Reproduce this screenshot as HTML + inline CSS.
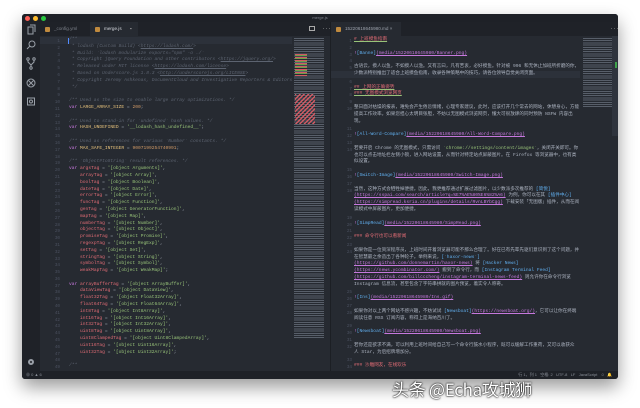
<!DOCTYPE html>
<html><head><meta charset="utf-8">
<style>
*{margin:0;padding:0;box-sizing:border-box}
body{width:640px;height:408px;background:#fff;position:relative;overflow:hidden;font-family:"Liberation Mono","Noto Sans CJK SC",monospace}
.win{position:absolute;left:22px;top:14px;width:596px;height:365px;background:#262a31;box-shadow:0 8px 18px rgba(0,0,0,.4);border-radius:3px;overflow:hidden}
.title{position:absolute;left:0;top:0;width:596px;height:8px;background:#1e2127;color:#7d828b;font:4px "Liberation Sans",sans-serif;text-align:center;line-height:8px}
.dot{position:absolute;top:2px;width:5px;height:5px;border-radius:50%}
.act{position:absolute;left:0;top:8px;width:18px;height:349px;background:#1f2228}
.tabs{position:absolute;left:18px;top:8px;width:578px;height:14px;background:#1f2228}
.tab{position:absolute;top:0;height:14px;font:4.6px "Liberation Sans",sans-serif;line-height:14px;color:#7d828b;padding-left:14px}
.tab i{position:absolute;left:5px;top:4.5px;width:5px;height:5px;background:#c08a3e;border-radius:1px}
.status{position:absolute;left:0;top:357px;width:596px;height:8px;background:#1e2127;color:#8a8f98;font:4px "Liberation Sans","Noto Sans CJK SC",sans-serif;line-height:8px}
.ln{position:absolute;color:#4b5160;font-size:4.3px;text-align:right;width:16px;white-space:pre}
.code{position:absolute;font-size:4.6px;white-space:pre;color:#abb2bf;line-height:6.8px}
.c{color:#5c6370;font-style:italic}.k{color:#c678dd}.v{color:#e06c75}.s{color:#98c379}.n{color:#d19a66}.y{color:#e5c07b}
.b{color:#61afef}.u{color:#c678dd;text-decoration:underline}.h{color:#e06c75;text-decoration:underline;text-decoration-color:#98c379}
.mm{position:absolute;height:1.2px}
.wm{position:absolute;left:392px;top:376px;font:17px "Noto Sans CJK SC",sans-serif;color:#fff;text-shadow:0 0 2px #000,0 0 1px #000;letter-spacing:-0.3px}
</style></head><body>
<div class="win">
 <div class="title">merge.js
  <div class="dot" style="left:3px;background:#fc5f57"></div>
  <div class="dot" style="left:11px;background:#fdbc2e"></div>
  <div class="dot" style="left:19px;background:#28c840"></div>
 </div>
 <div class="act">
  <svg width="18" height="349" viewBox="0 0 18 349" fill="none" stroke="#9aa0a8" stroke-width="1">
   <rect x="6" y="5" width="5" height="7"/><path d="M8 3h5v7"/>
   <circle cx="10" cy="22" r="3"/><path d="M8 24l-3 3"/>
   <circle cx="6" cy="37" r="1.2"/><circle cx="12" cy="37" r="1.2"/><circle cx="9" cy="46" r="1.2"/><path d="M6 38v2l3 3v2M12 38v2l-3 3"/>
   <circle cx="9" cy="61" r="4"/><path d="M6.5 58.5l5 5M11.5 58.5l-5 5"/>
   <rect x="5.5" y="76" width="7" height="7"/><circle cx="9" cy="79.5" r="1.5"/>
   <circle cx="9" cy="340" r="2.5" fill="#9aa0a8"/><circle cx="9" cy="340" r="1" fill="#1f2228" stroke="none"/>
  </svg>
 </div>
 <div class="tabs">
  <div class="tab" style="left:0;width:50px">_config.yml<i></i></div>
  <div class="tab" style="left:50px;width:48px;background:#262a31;color:#d7dae0">merge.js<i></i><span style="position:absolute;left:40px;color:#aaa">▪</span></div>
  <div style="position:absolute;left:269px;top:4px;width:6px;height:5px;border:1px solid #aaa"></div>
  <div style="position:absolute;left:282px;top:0;color:#aaa;font-size:5px;line-height:14px">···</div>
  <div style="position:absolute;left:290px;top:0;width:1px;height:14px;background:#1a1d22"></div>
  <div class="tab" style="left:291px;width:70px;background:#262a31;color:#9da3ad">15220618645980.md ×<i></i></div>
  <div style="position:absolute;left:570px;top:0;color:#aaa;font-size:5px;line-height:14px">···</div>
 </div>
 <!-- left editor -->
 <div style="position:absolute;left:18px;top:23px;width:290px;height:7px;background:#2c313a"></div>
 <div style="position:absolute;left:46px;top:24px;width:1px;height:6px;background:#528bff"></div>
 <div class="ln" style="left:22px;top:25px;line-height:6.8px">1
2
3
4
5
6
7
8
9
10
11
12
13
14
15
16
17
18
19
20
21
22
23
24
25
26
27
28
29
30
31
32
33
34
35
36
37
38
39
40
41
42
43
44
45
46
47
48
49</div>
<div class="code" style="left:47px;top:23px"><span class="c">/**
 * lodash (Custom Build) &lt;<u>https://lodash.com/</u>&gt;
 * Build: `lodash modularize exports="npm" -o ./`
 * Copyright jQuery Foundation and other contributors &lt;<u>https://jquery.org/</u>&gt;
 * Released under MIT license &lt;<u>https://lodash.com/license</u>&gt;
 * Based on Underscore.js 1.8.3 &lt;<u>http://underscorejs.org/LICENSE</u>&gt;
 * Copyright Jeremy Ashkenas, DocumentCloud and Investigative Reporters &amp; Editors
 */</span>

<span class="c">/** Used as the size to enable large array optimizations. */</span>
<span class="k">var</span> <span class="y">LARGE_ARRAY_SIZE</span> = <span class="n">200</span>;

<span class="c">/** Used to stand-in for `undefined` hash values. */</span>
<span class="k">var</span> <span class="y">HASH_UNDEFINED</span> = <span class="s">'__lodash_hash_undefined__'</span>;

<span class="c">/** Used as references for various `Number` constants. */</span>
<span class="k">var</span> <span class="y">MAX_SAFE_INTEGER</span> = <span class="n">9007199254740991</span>;

<span class="c">/** `Object#toString` result references. */</span>
<span class="k">var</span> <span class="v">argsTag</span> = <span class="s">'[object Arguments]'</span>,
    <span class="v">arrayTag</span> = <span class="s">'[object Array]'</span>,
    <span class="v">boolTag</span> = <span class="s">'[object Boolean]'</span>,
    <span class="v">dateTag</span> = <span class="s">'[object Date]'</span>,
    <span class="v">errorTag</span> = <span class="s">'[object Error]'</span>,
    <span class="v">funcTag</span> = <span class="s">'[object Function]'</span>,
    <span class="v">genTag</span> = <span class="s">'[object GeneratorFunction]'</span>,
    <span class="v">mapTag</span> = <span class="s">'[object Map]'</span>,
    <span class="v">numberTag</span> = <span class="s">'[object Number]'</span>,
    <span class="v">objectTag</span> = <span class="s">'[object Object]'</span>,
    <span class="v">promiseTag</span> = <span class="s">'[object Promise]'</span>,
    <span class="v">regexpTag</span> = <span class="s">'[object RegExp]'</span>,
    <span class="v">setTag</span> = <span class="s">'[object Set]'</span>,
    <span class="v">stringTag</span> = <span class="s">'[object String]'</span>,
    <span class="v">symbolTag</span> = <span class="s">'[object Symbol]'</span>,
    <span class="v">weakMapTag</span> = <span class="s">'[object WeakMap]'</span>;

<span class="k">var</span> <span class="v">arrayBufferTag</span> = <span class="s">'[object ArrayBuffer]'</span>,
    <span class="v">dataViewTag</span> = <span class="s">'[object DataView]'</span>,
    <span class="v">float32Tag</span> = <span class="s">'[object Float32Array]'</span>,
    <span class="v">float64Tag</span> = <span class="s">'[object Float64Array]'</span>,
    <span class="v">int8Tag</span> = <span class="s">'[object Int8Array]'</span>,
    <span class="v">int16Tag</span> = <span class="s">'[object Int16Array]'</span>,
    <span class="v">int32Tag</span> = <span class="s">'[object Int32Array]'</span>,
    <span class="v">uint8Tag</span> = <span class="s">'[object Uint8Array]'</span>,
    <span class="v">uint8ClampedTag</span> = <span class="s">'[object Uint8ClampedArray]'</span>,
    <span class="v">uint16Tag</span> = <span class="s">'[object Uint16Array]'</span>,
    <span class="v">uint32Tag</span> = <span class="s">'[object Uint32Array]'</span>;

<span class="c">/**</span></div>
 <!-- left minimap -->
 <div style="position:absolute;left:270px;top:22px;width:38px;height:335px;background:#262a31"></div>
 <div style="position:absolute;left:272px;top:24px;width:30px;height:300px;background:
  repeating-linear-gradient(180deg,rgba(150,160,175,.45) 0 1px,transparent 1px 2.2px)"></div>
 <div style="position:absolute;left:273px;top:40px;width:12px;height:22px;background:repeating-linear-gradient(180deg,#d05a63 0 1px,#6fa04a 1px 2px,transparent 2px 3px)"></div>
 <div style="position:absolute;left:273px;top:80px;width:20px;height:30px;background:repeating-linear-gradient(135deg,#d05a63 0 1.3px,transparent 1.3px 3px)"></div>
 <div style="position:absolute;left:308px;top:22px;width:1px;height:335px;background:#1c1f24"></div>
 <!-- right editor -->
 <div style="position:absolute;left:309px;top:57px;width:287px;height:7px;background:#2c313a"></div>
 <div class="ln" style="left:314px;top:25px;line-height:6.8px">1
2
3
4
5

6
7
8
9
10


11
12
13
14


15
16
17
18



19
20
21
22
23
24





25
26
27
28

29
30
31
32

33
34</div>
<div class="code" style="left:332px;top:23px;font-family:'Liberation Mono','Noto Sans CJK SC',monospace"><span class="h"># 上班摸鱼指南</span>

<span class="k">!</span><span class="b">[Banne]</span><span class="u">(media/15220618645980/Banner.png)</span>

古语云，摸人以鱼，不如摸人以渔。又有言曰，凡有苦衷，必好摸鱼。针对被 996 和无休止加班所折磨的你，
少数派特别推出了适合上班摸鱼指南，收录各种策略中的技巧，请各位领导自觉关闭页面。

<span class="h">## 上网的正确姿势</span>
<span class="h">### 无图模式浏览网页</span>

整日面对枯燥的报表，难免会产生倦怠情绪，心理专家建议，此时，应该打开几个常去的网站，休憩身心，方能
提高工作效率。如果您担心太明目张胆，不妨以无图模式浏览网页，懂大可很放肆的同时预防 NSFW 内容出
现。

<span class="k">!</span><span class="b">[All-Word-Compare]</span><span class="u">(media/15220618645980/All-Word-Compare.png)</span>

若要开启 Chrome 的无图模式，只需访问 <span class="s">`chrome://settings/content/images`</span>，关闭开关即可。你
也可以点击地址栏左侧小锁，进入网站设置，从而针对特定站点屏蔽图片。在 Firefox 等浏览器中，也有类
似设置。

<span class="k">!</span><span class="b">[Switch-Image]</span><span class="u">(media/15220618645980/Switch-Image.png)</span>

当然，这种方式会牺牲掉便捷。因此，我更推荐通过扩展过滤图片，以少数派多次推荐的 <span class="b">[简悦]</span>
<span class="u">(https://sspai.com/search/article?q=%E7%AE%80%E6%82%A6)</span> 为例，你可以在其 <span class="b">[插件中心]</span>
<span class="u">(https://simpread.ksria.cn/plugins/details/RvnLBYbCgg)</span> 下载安装「无图版」插件，从而在阅
读模式中屏蔽图片，更加便捷。

<span class="k">!</span><span class="b">[SimpRead]</span><span class="u">(media/15220618645980/SimpRead.png)</span>

<span class="v">### 命令行也可以看新闻</span>

如果你是一位资深程序员，上班时间开着浏览器可能不那么合理了。好在已有先辈先驱们意识到了这个问题，并
在智慧最之余造出了各种轮子。举例来说，<span class="b">[`haxor-news`]</span>
<span class="u">(https://github.com/donnemartin/haxor-news)</span> 将 <span class="b">[Hacker News]</span>
<span class="u">(https://news.ycombinator.com/)</span> 搬到了命令行，而 <span class="b">[Instagram Terminal Feed]</span>
<span class="u">(https://github.com/billcccheng/instagram-terminal-news-feed)</span> 则允许你在命令行浏览
Instagram 信息流，甚至包含了字符串拼就的图片预览，着实令人称奇。

<span class="k">!</span><span class="b">[Ins]</span><span class="u">(media/15220618645980/Ins.gif)</span>

如果你对以上两个网站不感兴趣，不妨试试 <span class="b">[Newsboat]</span><span class="u">(https://newsboat.org/)</span>，它可以让你在终端
阅读任意 RSS 订阅内容，称得上是海纳百川了。

<span class="k">!</span><span class="b">[Newsboat]</span><span class="u">(media/15220618645980/Newsboat.png)</span>

若你还是欲求不满，可以利用上班时间给自己写一个命令行鼓水小程序，既可以缓解工作重荷，又可以收获众
人 Star，为后招牌增加分。

<span class="v">### 沙雕网友，在线欢乐</span></div>
 <!-- right minimap -->
 <div style="position:absolute;left:558px;top:22px;width:38px;height:335px;background:#262a31"></div>
 <div style="position:absolute;left:561px;top:24px;width:30px;height:70px;background:
  repeating-linear-gradient(180deg,rgba(150,160,175,.45) 0 1px,transparent 1px 2.2px)"></div>
 <div style="position:absolute;left:590px;top:22px;width:6px;height:100px;background:#2f343d"></div>
 <div style="position:absolute;left:593px;top:48px;width:2px;height:6px;background:#3ea24a"></div>
 <div class="status">
  <span style="position:absolute;left:4px">⊗ 0 ▲ 6</span>
  <span style="position:absolute;right:6px">行 1，列 1&nbsp;&nbsp;&nbsp;空格: 2&nbsp;&nbsp;&nbsp;UTF-8&nbsp;&nbsp;&nbsp;LF&nbsp;&nbsp;&nbsp;JavaScript&nbsp;&nbsp;&nbsp;☺&nbsp;&nbsp;🔔</span>
 </div>
</div>
<div class="wm">头条 @Echa攻城狮</div>
</body></html>
